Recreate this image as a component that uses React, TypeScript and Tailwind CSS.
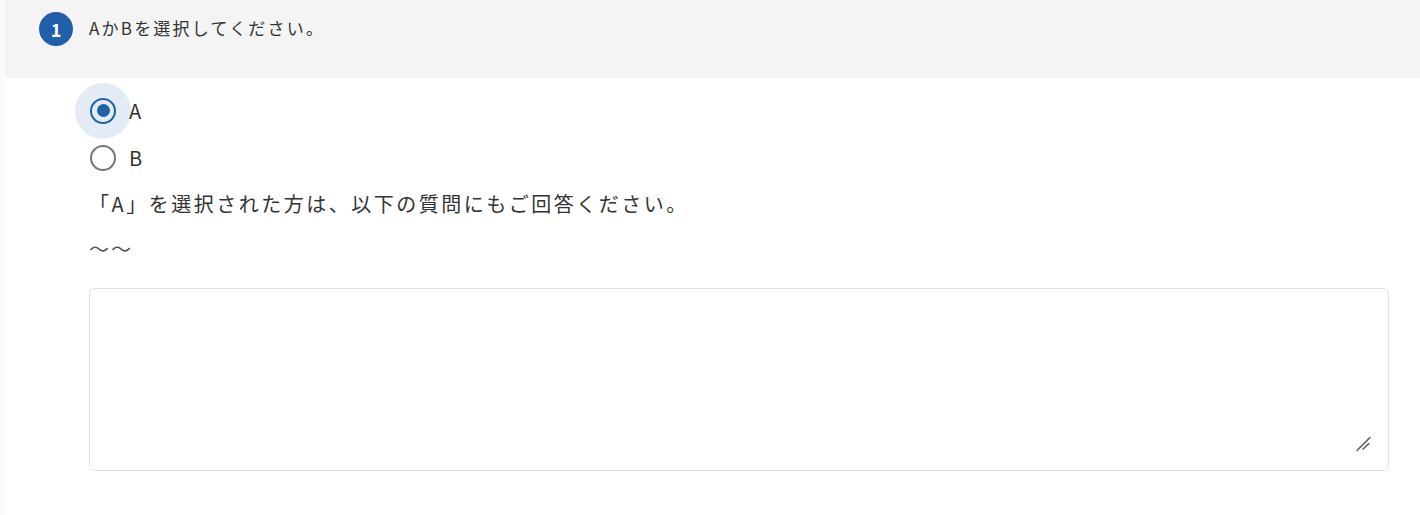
import React, { useState } from 'react';

const font = { fontFamily: '"Noto Sans CJK JP", "Noto Sans", sans-serif' };

export default function App() {
  const [choice, setChoice] = useState<'A' | 'B'>('A');

  return (
    <div className="min-h-[515px] bg-[#fafafa] pl-[5px] text-[#333333]" style={font}>
      <div className="min-h-[515px] bg-white">
        {/* Question header */}
        <div className="flex h-[78px] items-start gap-4 bg-[#f4f4f4] pl-[34px] pt-[12px]">
          <span className="flex h-[34px] w-[34px] items-center justify-center rounded-full bg-[#2160a8] text-[18px] font-bold text-white">
            1
          </span>
          <span className="pt-[3px] text-[17px] leading-[26px] tracking-[0.13em]">AかBを選択してください。</span>
        </div>

        {/* Body */}
        <div className="pl-[84px] pr-[31px]">
          <div className="flex flex-col pt-[9px]">
            {(['A', 'B'] as const).map(opt => {
              const checked = choice === opt;
              return (
                <label key={opt} className="flex h-[47px] cursor-pointer items-center">
                  <span
                    className={`flex h-[56px] w-[56px] -ml-[14px] items-center justify-center rounded-full ${
                      checked ? 'bg-[#e3ebf6]' : ''
                    }`}
                  >
                    <input
                      type="radio"
                      className="sr-only"
                      checked={checked}
                      onChange={() => setChoice(opt)}
                    />
                    <span
                      className={`flex h-[26px] w-[26px] items-center justify-center rounded-full border-2 ${
                        checked ? 'border-[#2160a8]' : 'border-[#777777]'
                      }`}
                    >
                      {checked && <span className="h-[13px] w-[13px] rounded-full bg-[#2160a8]" />}
                    </span>
                  </span>
                  <span className="-ml-[2px] text-[20px] leading-[28px]">{opt}</span>
                </label>
              );
            })}
          </div>

          <p className="mt-[9px] text-[20px] leading-[28px] tracking-[0.125em]">
            「A」を選択された方は、以下の質問にもご回答ください。
          </p>
          <p className="mt-[17px] text-[20px] leading-[28px] tracking-[0.1em] text-[#555555]">〜〜</p>

          <div className="relative mt-[25px]">
            <textarea className="block h-[183px] w-full resize-none rounded-[6px] border border-[#e2e2e2] p-3 text-[16px] outline-none" />
            <svg
              className="pointer-events-none absolute bottom-[19px] right-[17px] h-[16px] w-[16px]"
              viewBox="0 0 16 16"
              fill="none"
              stroke="#555555"
              strokeWidth="1.4"
              strokeLinecap="round"
            >
              <path d="M1 14.5L14 1.5" />
              <path d="M7 13L13 7.5" />
            </svg>
          </div>
        </div>
      </div>
    </div>
  );
}
